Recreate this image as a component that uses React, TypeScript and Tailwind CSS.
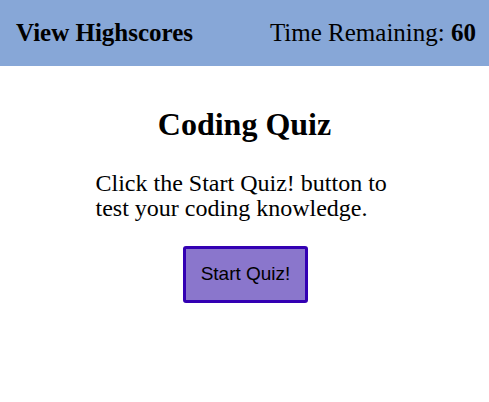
export default function App() {
  return (
    <div className="min-h-[402px] bg-white font-['Liberation_Serif',serif] text-black">
      <header className="flex h-[66px] items-center justify-between bg-[#87a7d7] pl-4 pr-[13px] text-[25px]">
        <a className="font-bold">View Highscores</a>
        <div>
          Time Remaining: <span className="font-bold">60</span>
        </div>
      </header>

      <main className="flex flex-col items-center pt-[40px]">
        <h1 className="text-[32px] font-bold leading-[37px]">Coding Quiz</h1>
        <p className="mt-[28px] w-[298px] text-[24px] leading-[25px]">
          Click the Start Quiz! button to test your coding knowledge.
        </p>
        <button className="mt-[25px] ml-[2px] flex h-[57px] w-[125px] items-center justify-center rounded-[3px] border-[3px] border-[#3300b3] bg-[#8a76cc] font-['Liberation_Sans',sans-serif] text-[19px]">
          Start Quiz!
        </button>
      </main>
    </div>
  )
}
